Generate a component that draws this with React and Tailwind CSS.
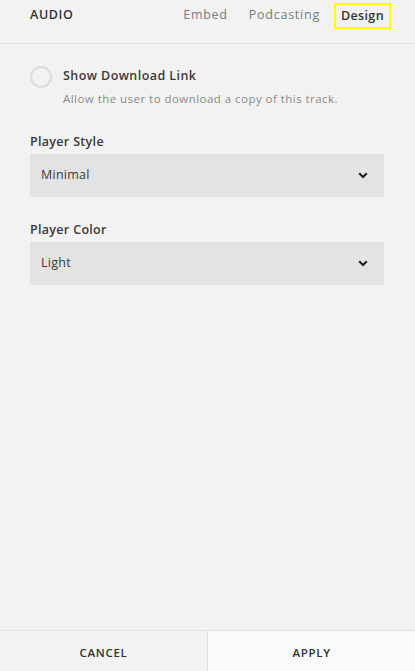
import { useState } from "react";

function Chevron() {
  return (
    <svg width="10" height="7" viewBox="0 0 10 7" className="text-[#222]">
      <path d="M1.2 1.2 L5 5 L8.8 1.2" fill="none" stroke="currentColor" strokeWidth="2.2" />
    </svg>
  );
}

function SelectField({ label, value }) {
  return (
    <div className="flex flex-col">
      <div className="mb-[4px] text-[12.5px] leading-[16px] font-semibold tracking-[0.025em] text-[#3a3a3a]">{label}</div>
      <div className="flex h-[43px] items-center justify-between bg-[#e3e3e3] pl-[11px] pr-[16px] text-[12.5px] tracking-[0.02em] text-[#3a3a3a]">
        <span>{value}</span>
        <Chevron />
      </div>
    </div>
  );
}

export default function App() {
  const [checked, setChecked] = useState(false);

  return (
    <div
      className="flex h-[671px] w-[415px] flex-col bg-[#f2f2f2] text-[#3a3a3a]"
      style={{ fontFamily: "'Open Sans', Lato, sans-serif" }}
    >
      {/* header */}
      <div className="flex h-[44px] items-start justify-between border-b border-[#e2e2e2] pl-[30px] pr-[24px]">
        <div className="mt-[7px] text-[12.5px] leading-[16px] font-semibold tracking-[0.05em] text-[#333]">AUDIO</div>
        <div className="flex items-start text-[12.5px] leading-[16px]">
          <span className="mt-[7px] text-[#7a7a7a] tracking-[0.06em]">Embed</span>
          <span className="ml-[21px] mt-[7px] text-[#7a7a7a] tracking-[0.06em]">Podcasting</span>
          <span className="ml-[14px] mt-[3px] flex h-[26px] items-center border-2 border-[#ffff00] px-[5px] font-semibold text-[#333] tracking-[0.03em]">
            Design
          </span>
        </div>
      </div>

      {/* body */}
      <div className="flex flex-1 flex-col px-[30px] pt-[22px]">
        <div className="flex items-start gap-[11px]">
          <button
            onClick={() => setChecked((v) => !v)}
            className={`h-[22px] w-[22px] shrink-0 rounded-full border-2 ${checked ? "border-[#333] bg-[#333]" : "border-[#dcdcdc]"}`}
            aria-label="Show Download Link"
          />
          <div className="flex flex-col pt-[2px]">
            <div className="text-[12.5px] leading-[16px] font-semibold tracking-[0.035em] text-[#3a3a3a]">Show Download Link</div>
            <div className="mt-[7px] text-[11.5px] leading-[16px] text-[#8a8a8a] tracking-[0.04em]">
              Allow the user to download a copy of this track.
            </div>
          </div>
        </div>

        <div className="mt-[27px] mr-[1px]">
          <SelectField label="Player Style" value="Minimal" />
        </div>
        <div className="mt-[25px] mr-[1px]">
          <SelectField label="Player Color" value="Light" />
        </div>
      </div>

      {/* footer */}
      <div className="flex h-[41px] border-t border-[#e2e2e2] text-[11.5px] font-semibold tracking-[0.06em] text-[#333]">
        <button className="flex w-[207px] items-center justify-center bg-[#f2f2f2] pt-[4px]">CANCEL</button>
        <button className="flex flex-1 items-center justify-center border-l border-[#e2e2e2] bg-[#fafafa] pt-[4px]">APPLY</button>
      </div>
    </div>
  );
}
